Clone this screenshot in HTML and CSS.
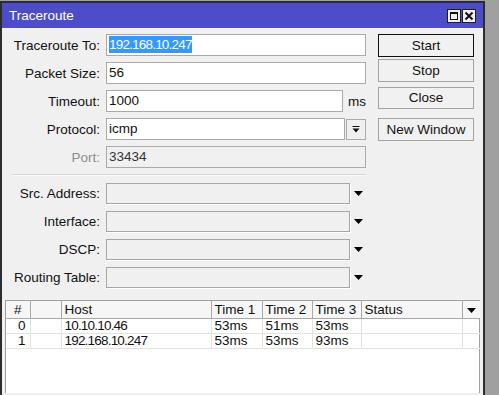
FILE: index.html
```html
<!DOCTYPE html>
<html lang="en">
<head>
    <meta charset="UTF-8">
    <title>Traceroute</title>
    <link rel="stylesheet" href="styles.css">
</head>
<body>
    <div class="window">
        <div class="titlebar">
            <span class="title">Traceroute</span>
            <div class="title-buttons">
                <span class="tbtn">
                    <svg width="12" height="12" viewBox="0 0 12 12"><rect x="2.5" y="2.5" width="7" height="7" fill="none" stroke="#111" stroke-width="1"/><line x1="2" y1="3" x2="10" y2="3" stroke="#111" stroke-width="2"/></svg>
                </span>
                <span class="tbtn">
                    <svg width="12" height="12" viewBox="0 0 12 12"><path d="M2.5 2.5 L9.5 9.5 M9.5 2.5 L2.5 9.5" stroke="#111" stroke-width="2"/></svg>
                </span>
            </div>
        </div>
        <div class="content">
            <div class="top">
                <div class="form">
                    <div class="row">
                        <label>Traceroute To:</label>
                        <div class="field"><div class="input"><span class="selected ip">192.168.10.247</span></div></div>
                    </div>
                    <div class="row">
                        <label>Packet Size:</label>
                        <div class="field"><div class="input">56</div></div>
                    </div>
                    <div class="row">
                        <label>Timeout:</label>
                        <div class="field"><div class="input short">1000</div><span class="unit">ms</span></div>
                    </div>
                    <div class="row">
                        <label>Protocol:</label>
                        <div class="field">
                            <div class="input medium">icmp</div>
                            <span class="drop-btn">
                                <svg width="8" height="9" viewBox="0 0 8 9"><rect x="0.5" y="1" width="7" height="1" fill="#111"/><polygon points="0.5,3.5 7.5,3.5 4,7.5" fill="#111"/></svg>
                            </span>
                        </div>
                    </div>
                    <div class="row">
                        <label class="disabled">Port:</label>
                        <div class="field"><div class="input readonly">33434</div></div>
                    </div>

                    <div class="separator"></div>

                    <div class="row low">
                        <label>Src. Address:</label>
                        <div class="field"><div class="combo"></div><svg class="arrow" width="9" height="6" viewBox="0 0 9 6"><polygon points="0,0 9,0 4.5,5" fill="#000"/></svg></div>
                    </div>
                    <div class="row low">
                        <label>Interface:</label>
                        <div class="field"><div class="combo"></div><svg class="arrow" width="9" height="6" viewBox="0 0 9 6"><polygon points="0,0 9,0 4.5,5" fill="#000"/></svg></div>
                    </div>
                    <div class="row low">
                        <label>DSCP:</label>
                        <div class="field"><div class="combo"></div><svg class="arrow" width="9" height="6" viewBox="0 0 9 6"><polygon points="0,0 9,0 4.5,5" fill="#000"/></svg></div>
                    </div>
                    <div class="row low">
                        <label>Routing Table:</label>
                        <div class="field"><div class="combo"></div><svg class="arrow" width="9" height="6" viewBox="0 0 9 6"><polygon points="0,0 9,0 4.5,5" fill="#000"/></svg></div>
                    </div>
                </div>

                <div class="buttons">
                    <div class="btn default">Start</div>
                    <div class="btn stop">Stop</div>
                    <div class="btn close">Close</div>
                    <div class="btn new">New Window</div>
                </div>
            </div>

            <div class="grid">
                <table class="results">
                    <colgroup>
                        <col style="width:24px">
                        <col style="width:31px">
                        <col style="width:150px">
                        <col style="width:51px">
                        <col style="width:50px">
                        <col style="width:49px">
                        <col style="width:101px">
                        <col style="width:18px">
                    </colgroup>
                    <thead>
                        <tr>
                            <th class="center">#</th>
                            <th></th>
                            <th>Host</th>
                            <th>Time 1</th>
                            <th>Time 2</th>
                            <th>Time 3</th>
                            <th>Status</th>
                            <th class="center last"><svg width="9" height="6" viewBox="0 0 9 6"><polygon points="0,0 9,0 4.5,5" fill="#000"/></svg></th>
                        </tr>
                    </thead>
                    <tbody>
                        <tr>
                            <td class="num">0</td>
                            <td></td>
                            <td class="ip">10.10.10.46</td>
                            <td>53ms</td>
                            <td>51ms</td>
                            <td>53ms</td>
                            <td></td>
                            <td class="last"></td>
                        </tr>
                        <tr>
                            <td class="num">1</td>
                            <td></td>
                            <td class="ip">192.168.10.247</td>
                            <td>53ms</td>
                            <td>53ms</td>
                            <td>93ms</td>
                            <td></td>
                            <td class="last"></td>
                        </tr>
                    </tbody>
                </table>
            </div>
        </div>
    </div>
</body>
</html>
```

FILE: styles.css
```css
body {
    margin: 0;
    height: 395px;
    overflow: hidden;
    background-color: #a0a0a0;
    font-family: "Liberation Sans", Arial, sans-serif;
    font-size: 13.5px;
    color: #111;
}

.window {
    margin-top: 1px;
    width: 481px;
    height: 392px;
    border: 2px solid #2d2d2d;
    border-bottom: none;
    background-color: #f0f0f0;
}

.titlebar {
    height: 25px;
    background-color: #4d4dc9;
    color: #fff;
    display: flex;
    align-items: center;
    justify-content: space-between;
    padding: 0 7px;
}

.title-buttons {
    display: flex;
    gap: 1px;
}

    .tbtn {
        width: 14px;
        height: 14px;
        box-sizing: border-box;
        border: 1px solid #1e1e1e;
        background-color: #f0f0f0;
        display: flex;
        align-items: center;
        justify-content: center;
    }

.content {
    padding-top: 6px;
}

.top {
    display: flex;
}

.form {
    width: 354px;
    padding-left: 10px;
}

.row {
    display: flex;
    align-items: center;
    height: 22px;
    margin-bottom: 6px;
}

    .row label {
        width: 88px;
        margin-right: 6px;
        text-align: right;
        white-space: nowrap;
    }

    .row label.disabled {
        color: #8d8d8d;
    }

    .row.low {
        height: 21px;
        margin-bottom: 7px;
    }

.field {
    width: 260px;
    height: 100%;
    display: flex;
    align-items: center;
}

.input {
    flex: 1;
    height: 22px;
    box-sizing: border-box;
    border: 1px solid #a9a9a9;
    background-color: #fff;
    padding: 0 2px;
    line-height: 20px;
    white-space: nowrap;
    overflow: hidden;
}

    .input.short {
        flex: 0 0 237px;
    }

    .input.medium {
        flex: 0 0 239px;
    }

    .input.readonly {
        background-color: #f0f0f0;
        color: #333;
    }

.selected {
    background-color: #3399ff;
    color: #fff;
    padding: 1px 0;
}

.ip {
    letter-spacing: -0.8px;
}

.unit {
    margin-left: 5px;
}

.drop-btn {
    width: 22px;
    height: 21px;
    margin-left: 1px;
    box-sizing: border-box;
    border: 1px solid #a9a9a9;
    background-color: #f0f0f0;
    display: flex;
    align-items: center;
    justify-content: center;
}

.separator {
    height: 1px;
    margin: 2px 0 7px 0;
    background-color: #d5d5d5;
    border-bottom: 1px solid #fbfbfb;
}

.combo {
    width: 244px;
    height: 21px;
    box-sizing: border-box;
    border: 1px solid #a6a6a6;
    box-shadow: 1px 1px 0 #fff;
    background-color: #f0f0f0;
}

.arrow {
    margin-left: 4px;
}

.buttons {
    width: 96px;
    margin-left: 12px;
    display: flex;
    flex-direction: column;
}

    .btn {
        height: 23px;
        box-sizing: border-box;
        border: 1px solid #a3a3a3;
        background-color: #f1f1f1;
        text-align: center;
        line-height: 21px;
        color: #111;
    }

    .btn.default {
        border-color: #111;
    }

    .btn.stop {
        margin-top: 2px;
    }

    .btn.close {
        margin-top: 5px;
        height: 22px;
        line-height: 20px;
    }

    .btn.new {
        margin-top: 9px;
    }

.grid {
    margin: 5px 3px 0 3px;
    height: 92px;
    border: 1px solid #a0a0a0;
    border-bottom: none;
    background-color: #fff;
}

.results {
    width: 474px;
    table-layout: fixed;
    border-collapse: collapse;
}

    .results th {
        height: 17px;
        padding: 0 3px;
        text-align: left;
        font-weight: normal;
        background-color: #f6f6f6;
        border-right: 1px solid #a8a8a8;
        border-bottom: 1px solid #a8a8a8;
        white-space: nowrap;
        overflow: hidden;
        line-height: 17px;
    }

    .results td {
        height: 14px;
        padding: 0 3px;
        line-height: 14px;
        border-right: 1px solid #e2e2e2;
        border-bottom: 1px solid #e2e2e2;
        white-space: nowrap;
        overflow: hidden;
    }

    .results .center {
        text-align: center;
        padding: 0;
    }

    .results .num {
        text-align: right;
        padding-right: 4px;
    }

    .results .last {
        border-right: none;
    }
```
